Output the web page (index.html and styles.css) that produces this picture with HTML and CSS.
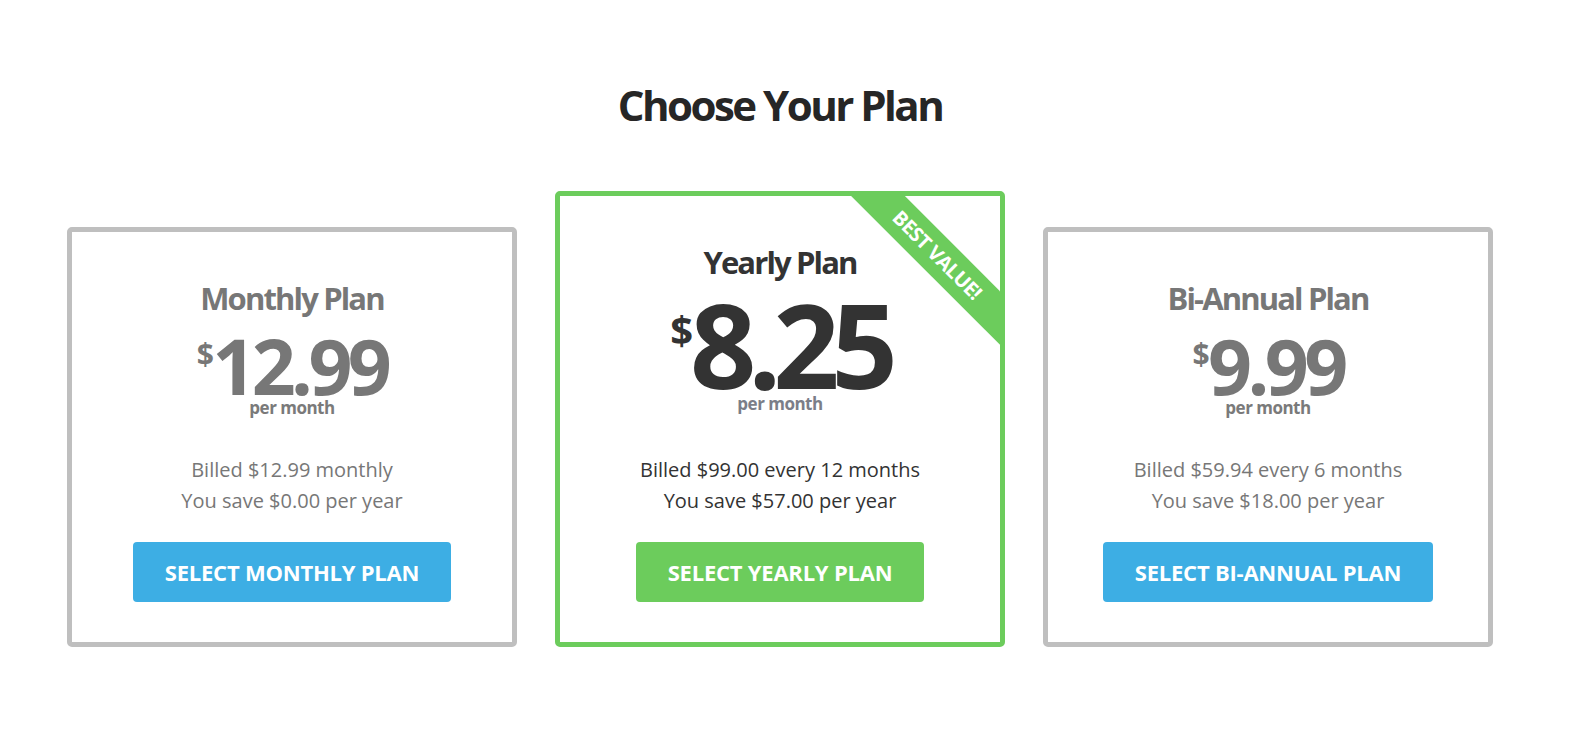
FILE: index.html
```html
<!DOCTYPE html>
<html lang="en">
<head>
<meta charset="utf-8">
<title>Choose Your Plan</title>
<link rel="stylesheet" href="styles.css">
</head>
<body>
<div class="pricing">
  <h1 class="pricing-title">Choose Your Plan</h1>
  <div class="plans">
    <div class="plan">
      <h2 class="plan-name">Monthly Plan</h2>
      <div class="price"><span class="currency">$</span><span class="amount">12.99</span></div>
      <div class="per">per month</div>
      <p class="billing">Billed $12.99 monthly<br>You save $0.00 per year</p>
      <a class="btn btn-blue" href="#">Select Monthly Plan</a>
    </div>
    <div class="plan plan-featured">
      <div class="ribbon">Best Value!</div>
      <h2 class="plan-name">Yearly Plan</h2>
      <div class="price"><span class="currency">$</span><span class="amount">8.25</span></div>
      <div class="per">per month</div>
      <p class="billing">Billed $99.00 every 12 months<br>You save $57.00 per year</p>
      <a class="btn btn-green" href="#">Select Yearly Plan</a>
    </div>
    <div class="plan">
      <h2 class="plan-name">Bi-Annual Plan</h2>
      <div class="price"><span class="currency">$</span><span class="amount">9.99</span></div>
      <div class="per">per month</div>
      <p class="billing">Billed $59.94 every 6 months<br>You save $18.00 per year</p>
      <a class="btn btn-blue" href="#">Select Bi-Annual Plan</a>
    </div>
  </div>
</div>
</body>
</html>
```

FILE: styles.css
```css
* { box-sizing: border-box; }
html, body { margin: 0; padding: 0; background: #fff; }
body {
  font-family: "Open Sans", "Noto Sans", "DejaVu Sans", sans-serif;
  color: #333;
}
.pricing {
  width: 1426px;
  margin-left: 67px;
  padding-top: 80px;
}
.pricing-title {
  margin: 0;
  text-align: center;
  font-size: 42px;
  line-height: 1.2;
  font-weight: 700;
  letter-spacing: -0.06em;
  color: #262626;
}
.plans {
  display: flex;
  align-items: flex-end;
  gap: 38px;
  margin-top: 61px;
}
.plan {
  position: relative;
  overflow: hidden;
  width: 450px;
  flex: 0 0 450px;
  border: 5px solid #bfbfbf;
  border-radius: 5px;
  padding: 48px 20px 40px;
  text-align: center;
  color: #777;
}
.plan-featured {
  border-color: #6ccc5c;
  color: #333;
}
.plan-name {
  margin: 0;
  font-size: 31px;
  line-height: 1.2;
  font-weight: 700;
  letter-spacing: -0.06em;
}
.price {
  margin-top: 16px;
  font-weight: 700;
  line-height: 0.85;
  font-size: 77px;
  letter-spacing: -0.06em;
}
.plan-featured .price { font-size: 116px; margin-top: 13px; letter-spacing: -0.07em; }
.currency {
  font-size: 30px;
  line-height: 1;
  vertical-align: top;
  position: relative;
  top: 6px;
  margin-right: 3px;
}
.plan-featured .currency { font-size: 40px; top: 15px; margin-right: 5px; }
.per {
  margin-top: 0;
  font-size: 17px;
  line-height: 20px;
  font-weight: 700;
  letter-spacing: -0.03em;
  color: #7a7a7a;
}
.plan-featured .per { color: #7b7e88; margin-top: 1px; }
.billing {
  margin: 36px 0 0;
  font-size: 20px;
  line-height: 31px;
}
.plan-featured .billing { margin-top: 40px; }
.btn {
  display: inline-block;
  margin-top: 26px;
  height: 60px;
  line-height: 60px;
  padding: 0 32px;
  border-radius: 4px;
  color: #fff;
  text-decoration: none;
  text-transform: uppercase;
  font-size: 22px;
  font-weight: 700;
  letter-spacing: -0.01em;
}
.btn-blue { background: #3daee4; }
.btn-green { background: #6ccc5c; }
.ribbon {
  position: absolute;
  top: 40px;
  right: -62px;
  width: 250px;
  height: 38px;
  line-height: 38px;
  background: #6ccc5c;
  color: #fff;
  font-size: 20px;
  font-weight: 700;
  text-transform: uppercase;
  letter-spacing: -0.03em;
  text-align: center;
  transform: rotate(45deg);
}
```
